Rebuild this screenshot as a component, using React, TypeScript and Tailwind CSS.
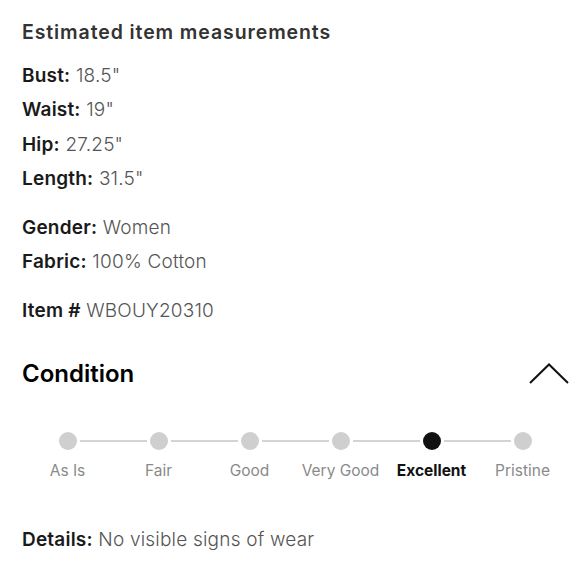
import React from "react";

const font = { fontFamily: "Inter, 'Noto Sans', sans-serif" };

function Row({ label, value }: { label: string; value: string }) {
  return (
    <div className="text-[19px] leading-[34.5px] tracking-[0.2px]">
      <span className="font-semibold text-[#1a1a1a]">{label}</span>{" "}
      <span className="font-light text-[#555]">{value}</span>
    </div>
  );
}

const steps = ["As Is", "Fair", "Good", "Very Good", "Excellent", "Pristine"];
const active = 4;

export default function App() {
  return (
    <div className="h-[580px] w-[580px] bg-white pl-[22px] pr-[12px] pt-[18px]" style={font}>
      <h2 className="text-[19.5px] font-semibold leading-[28px] tracking-[0.9px] text-[#333]">
        Estimated item measurements
      </h2>

      <div className="mt-[12.75px]">
        <Row label="Bust:" value={'18.5"'} />
        <Row label="Waist:" value={'19"'} />
        <Row label="Hip:" value={'27.25"'} />
        <Row label="Length:" value={'31.5"'} />
      </div>

      <div className="mt-[14px]">
        <Row label="Gender:" value="Women" />
        <Row label="Fabric:" value="100% Cotton" />
      </div>

      <div className="mt-[14.5px]">
        <Row label="Item #" value="WBOUY20310" />
      </div>

      <div className="mt-[28.75px] flex h-[32px] items-center justify-between">
        <h3 className="text-[24px] font-semibold leading-[32px] text-black">Condition</h3>
        <svg width="40" height="22" viewBox="0 0 40 22" fill="none" className="mr-[-1px]">
          <path d="M1 20 L20 1.5 L39 20" stroke="#111" strokeWidth="2" />
        </svg>
      </div>

      <div className="mt-[42px] grid grid-cols-6">
        {steps.map((s, i) => (
          <div key={s} className="flex flex-col items-center">
            <div className="relative flex h-[18px] w-full items-center justify-center">
              {i > 0 && <div className="absolute left-0 right-[calc(50%+12px)] top-1/2 h-[2px] -translate-y-1/2 bg-[#d4d4d4]" />}
              {i < steps.length - 1 && <div className="absolute left-[calc(50%+12px)] right-0 top-1/2 h-[2px] -translate-y-1/2 bg-[#d4d4d4]" />}
              <div className={`h-[18px] w-[18px] rounded-full ${i === active ? "bg-[#111]" : "bg-[#cfcfcf]"}`} />
            </div>
            <div
              className={`mt-[11px] whitespace-nowrap text-[15.5px] leading-[20px] ${i === active ? "font-bold text-[#111]" : "font-normal text-[#8a8a8a]"}`}
            >
              {s}
            </div>
          </div>
        ))}
      </div>

      <div className="mt-[42.75px]">
        <Row label="Details:" value="No visible signs of wear" />
      </div>
    </div>
  );
}
